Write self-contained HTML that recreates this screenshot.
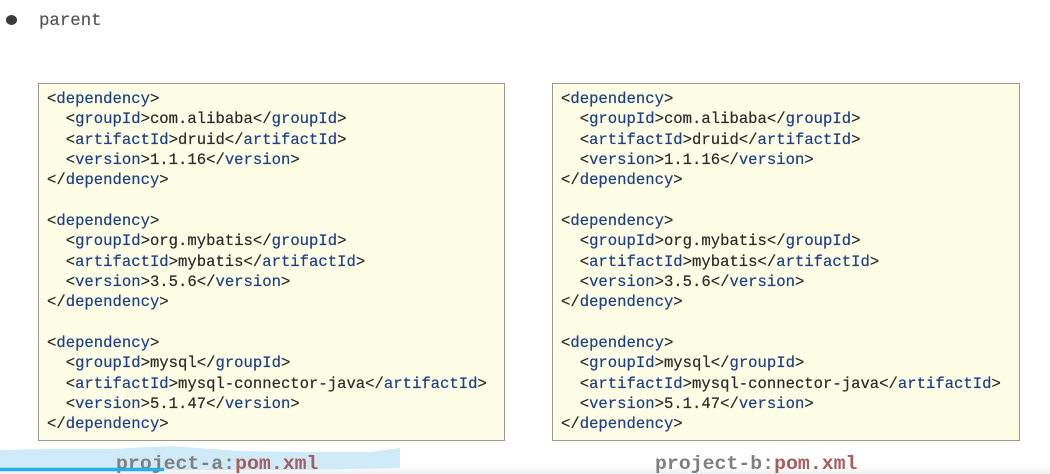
<!DOCTYPE html>
<html>
<head>
<meta charset="utf-8">
<style>
html,body{margin:0;padding:0;width:1050px;height:474px;overflow:hidden;background:#fff;position:relative}
.box{position:absolute;top:83px;height:356px;background:#fefde6;border:1px solid #9a9a92;box-sizing:content-box}
#a{left:38px;width:465px}
#b{left:552px;width:466px}
pre{position:absolute;margin:0;top:5px;left:8px;font:15.6px/20.33px "Liberation Mono",monospace;color:#2a2a2a;-webkit-text-stroke:.2px #2a2a2a}
pre b{font-weight:normal;color:#1c3f86;-webkit-text-stroke:.2px #1c3f86}
.t{position:absolute;font:bold 19.85px/24px "Liberation Mono",monospace;color:#808080;white-space:pre;top:452px}
.t i{font-style:normal;color:#a85c5c}
#parent{position:absolute;left:39px;top:12px;font:17.4px/20px "Liberation Mono",monospace;color:#555;-webkit-text-stroke:.2px #555}
#dot{position:absolute;left:6px;top:15px;width:11px;height:10px;border-radius:50%;background:#3a3a3a}
#fade{position:absolute;left:0;top:466px;width:1050px;height:8px;background:linear-gradient(#fff,#efefef)}
</style>
</head>
<body>
<div id="dot"></div>
<div id="parent">parent</div>
<div class="box" id="a"><pre>&lt;<b>dependency</b>&gt;
  &lt;<b>groupId</b>&gt;com.alibaba&lt;/<b>groupId</b>&gt;
  &lt;<b>artifactId</b>&gt;druid&lt;/<b>artifactId</b>&gt;
  &lt;<b>version</b>&gt;1.1.16&lt;/<b>version</b>&gt;
&lt;/<b>dependency</b>&gt;

&lt;<b>dependency</b>&gt;
  &lt;<b>groupId</b>&gt;org.mybatis&lt;/<b>groupId</b>&gt;
  &lt;<b>artifactId</b>&gt;mybatis&lt;/<b>artifactId</b>&gt;
  &lt;<b>version</b>&gt;3.5.6&lt;/<b>version</b>&gt;
&lt;/<b>dependency</b>&gt;

&lt;<b>dependency</b>&gt;
  &lt;<b>groupId</b>&gt;mysql&lt;/<b>groupId</b>&gt;
  &lt;<b>artifactId</b>&gt;mysql-connector-java&lt;/<b>artifactId</b>&gt;
  &lt;<b>version</b>&gt;5.1.47&lt;/<b>version</b>&gt;
&lt;/<b>dependency</b>&gt;</pre></div>
<div class="box" id="b"><pre>&lt;<b>dependency</b>&gt;
  &lt;<b>groupId</b>&gt;com.alibaba&lt;/<b>groupId</b>&gt;
  &lt;<b>artifactId</b>&gt;druid&lt;/<b>artifactId</b>&gt;
  &lt;<b>version</b>&gt;1.1.16&lt;/<b>version</b>&gt;
&lt;/<b>dependency</b>&gt;

&lt;<b>dependency</b>&gt;
  &lt;<b>groupId</b>&gt;org.mybatis&lt;/<b>groupId</b>&gt;
  &lt;<b>artifactId</b>&gt;mybatis&lt;/<b>artifactId</b>&gt;
  &lt;<b>version</b>&gt;3.5.6&lt;/<b>version</b>&gt;
&lt;/<b>dependency</b>&gt;

&lt;<b>dependency</b>&gt;
  &lt;<b>groupId</b>&gt;mysql&lt;/<b>groupId</b>&gt;
  &lt;<b>artifactId</b>&gt;mysql-connector-java&lt;/<b>artifactId</b>&gt;
  &lt;<b>version</b>&gt;5.1.47&lt;/<b>version</b>&gt;
&lt;/<b>dependency</b>&gt;</pre></div>
<div id="fade"></div>
<svg style="position:absolute;left:0;top:446px" width="400" height="28"><path d="M0 4 L50 3 L110 3 L170 0 L240 5 L310 6 L370 6 L400 2 V22 L300 24 H0Z" fill="#cfeaf8"/></svg>
<div class="t" style="left:116px">project-a:<i>pom.xml</i></div>
<div class="t" style="left:655px">project-b:<i>pom.xml</i></div>
<svg style="position:absolute;left:0;top:466px" width="170" height="8"><path d="M0 3.500 H164" stroke="#27aee8" stroke-width="3.500" fill="none"/></svg>
</body>
</html>
